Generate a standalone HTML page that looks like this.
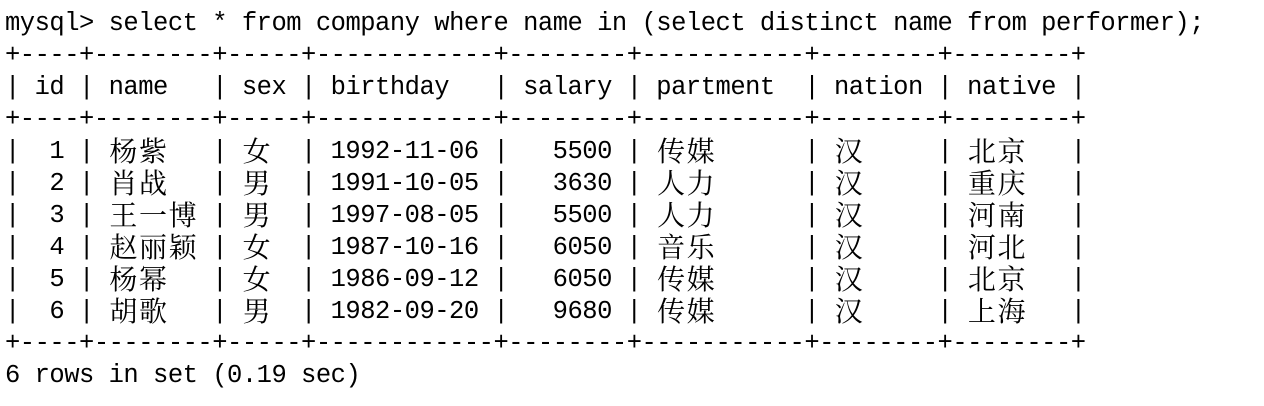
<!DOCTYPE html>
<html><head><meta charset="utf-8">
<style>
html,body{margin:0;padding:0;background:#fff;width:1264px;height:406px;overflow:hidden}
pre{margin:0;position:absolute;left:5px;top:8px;font-family:"Liberation Mono","Noto Sans CJK SC",monospace;font-size:25.5px;letter-spacing:-0.5px;line-height:32px;color:#000}
.c{display:inline-block;width:29.6px;height:32px;overflow:visible;text-align:center;font-family:"Noto Serif CJK SC",serif;font-size:28px;letter-spacing:0;line-height:32px;vertical-align:top;position:relative;top:-2px}
</style></head><body>
<pre>mysql&gt; select * from company where name in (select distinct name from performer);
+----+--------+-----+------------+--------+-----------+--------+--------+
| id | name   | sex | birthday   | salary | partment  | nation | native |
+----+--------+-----+------------+--------+-----------+--------+--------+
|  1 | <span class="c">杨</span><span class="c">紫</span>   | <span class="c">女</span>  | 1992-11-06 |   5500 | <span class="c">传</span><span class="c">媒</span>      | <span class="c">汉</span>     | <span class="c">北</span><span class="c">京</span>   |
|  2 | <span class="c">肖</span><span class="c">战</span>   | <span class="c">男</span>  | 1991-10-05 |   3630 | <span class="c">人</span><span class="c">力</span>      | <span class="c">汉</span>     | <span class="c">重</span><span class="c">庆</span>   |
|  3 | <span class="c">王</span><span class="c">一</span><span class="c">博</span> | <span class="c">男</span>  | 1997-08-05 |   5500 | <span class="c">人</span><span class="c">力</span>      | <span class="c">汉</span>     | <span class="c">河</span><span class="c">南</span>   |
|  4 | <span class="c">赵</span><span class="c">丽</span><span class="c">颖</span> | <span class="c">女</span>  | 1987-10-16 |   6050 | <span class="c">音</span><span class="c">乐</span>      | <span class="c">汉</span>     | <span class="c">河</span><span class="c">北</span>   |
|  5 | <span class="c">杨</span><span class="c">幂</span>   | <span class="c">女</span>  | 1986-09-12 |   6050 | <span class="c">传</span><span class="c">媒</span>      | <span class="c">汉</span>     | <span class="c">北</span><span class="c">京</span>   |
|  6 | <span class="c">胡</span><span class="c">歌</span>   | <span class="c">男</span>  | 1982-09-20 |   9680 | <span class="c">传</span><span class="c">媒</span>      | <span class="c">汉</span>     | <span class="c">上</span><span class="c">海</span>   |
+----+--------+-----+------------+--------+-----------+--------+--------+
6 rows in set (0.19 sec)</pre>
</body></html>
